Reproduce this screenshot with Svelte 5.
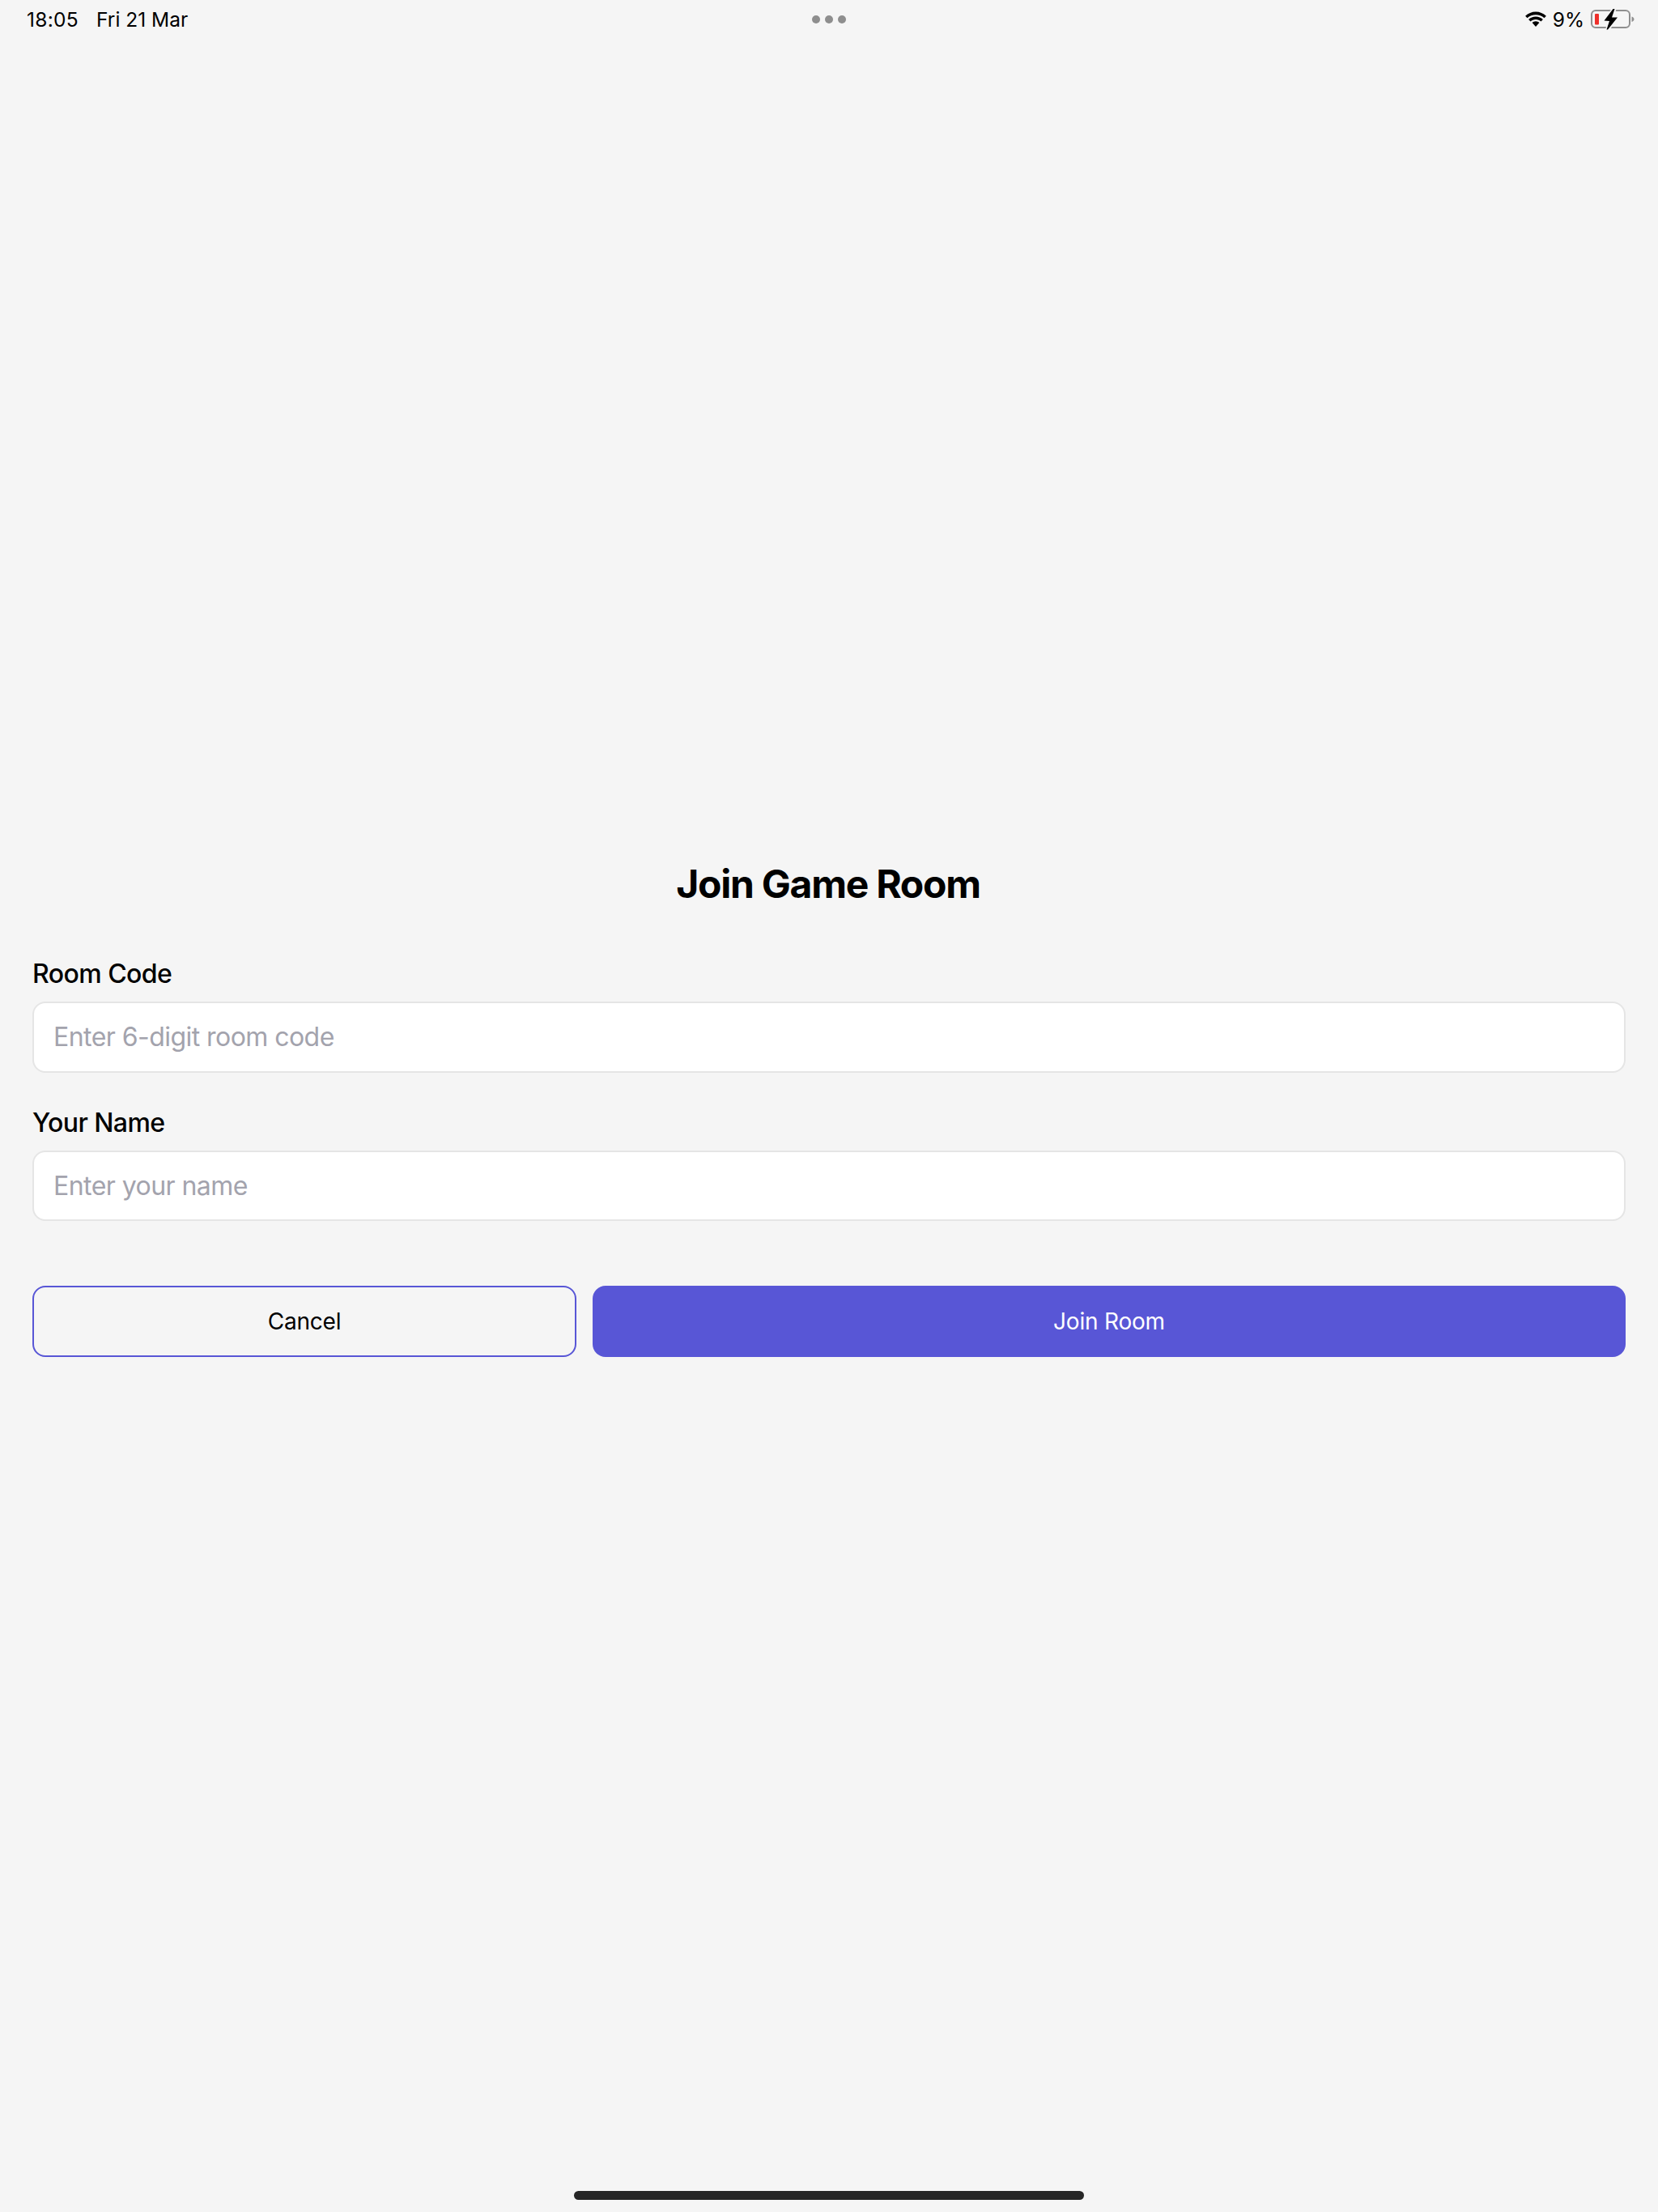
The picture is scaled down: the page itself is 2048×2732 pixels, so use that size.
<script>
  let roomCode = $state('');
  let playerName = $state('');
</script>

<div class="page">
  <header class="status">
    <div class="clock"><span class="time">18:05</span><span>Fri 21 Mar</span></div>
    <div class="dots"><i></i><i></i><i></i></div>
    <div class="sys">
      <svg class="wifi" width="30" height="20" viewBox="0 0 30 20" aria-hidden="true">
        <path d="M15 4.200c4 0 7.700 1.500 10.500 4.100l2.400-2.500C24.400 2.400 19.900.4 15 .4S5.600 2.400 2.100 5.800l2.400 2.500C7.300 5.700 11 4.200 15 4.200z"/>
        <path d="M15 10c2.500 0 4.800 1 6.500 2.600l2.400-2.500C21.600 7.900 18.500 6.500 15 6.500s-6.600 1.400-8.900 3.600l2.400 2.500C10.200 11 12.500 10 15 10z"/>
        <path d="M15 12.300c-1.700 0-3.200.7-4.400 1.800L15 19l4.400-4.900c-1.200-1.100-2.700-1.800-4.400-1.800z"/>
      </svg>
      <span class="pct">9%</span>
      <svg class="battery" width="54" height="26" viewBox="0 0 54 26" aria-hidden="true">
        <rect x="1" y="2" width="47" height="21" rx="5" fill="none" stroke="#8f8f8f" stroke-width="2"/>
        <path d="M50.500 9.500c1.700.5 3 1.700 3 3.200s-1.300 2.700-3 3.200z" fill="#8f8f8f"/>
        <rect x="5" y="6" width="5" height="13.500" rx="1" fill="#ee2f2a"/>
        <path d="M16.500 14.500 27.500 0h2.500l-3.500 10.500h7L21.500 25.500h-2L23 15z" fill="#f5f5f5" stroke="#f5f5f5" stroke-width="3"/>
        <path d="M16.500 14.500 27.500 0h2l-3.500 10.500h7L21 25.500h-1.500L23 15z" fill="#000"/>
      </svg>
    </div>
  </header>

  <main class="form">
    <h1>Join Game Room</h1>
    <div class="field">
      <label for="code">Room Code</label>
      <input id="code" placeholder="Enter 6-digit room code" bind:value={roomCode} />
    </div>
    <div class="field">
      <label for="name">Your Name</label>
      <input id="name" placeholder="Enter your name" bind:value={playerName} />
    </div>
    <div class="actions">
      <button class="cancel" type="button">Cancel</button>
      <button class="join" type="button">Join Room</button>
    </div>
  </main>

  <div class="home"></div>
</div>

<style>
  :global(body) {
    margin: 0;
    background: #f5f5f5;
  }
  .page {
    position: relative;
    box-sizing: border-box;
    height: 2732px;
    padding: 5px 40px 0;
    display: flex;
    flex-direction: column;
    justify-content: center;
    background: #f5f5f5;
    color: #000;
    font-family: Inter, "Liberation Sans", sans-serif;
  }
  .status {
    position: absolute;
    top: 0;
    left: 0;
    right: 0;
    height: 48px;
    font-size: 24.5px;
    line-height: 48px;
  }
  .clock {
    position: absolute;
    left: 33px;
    top: 0;
    display: flex;
    gap: 22px;
  }
  .time {
    letter-spacing: 0.3px;
  }
  .dots {
    position: absolute;
    left: 1003px;
    top: 19px;
    display: flex;
    gap: 6px;
  }
  .dots i {
    width: 10px;
    height: 10px;
    border-radius: 50%;
    background: #8e8e8e;
  }
  .sys {
    position: absolute;
    right: 29px;
    top: 0;
    height: 48px;
    display: flex;
    align-items: center;
    gap: 8px;
  }
  .wifi {
    display: block;
    margin: -1px -2px 0 0;
  }
  .battery {
    display: block;
  }
  h1 {
    margin: 0 0 58px;
    padding-right: 2px;
    text-align: center;
    font-size: 48px;
    line-height: 62px;
    font-weight: 700;
    letter-spacing: -1.25px;
  }
  .field {
    margin-bottom: 40px;
  }
  label {
    display: block;
    margin-bottom: 12px;
    font-size: 32px;
    line-height: 44px;
    font-weight: 500;
    letter-spacing: -0.55px;
  }
  input {
    display: block;
    box-sizing: border-box;
    width: 100%;
    height: 87.5px;
    padding: 0 24px;
    border: 2px solid #e5e5e5;
    border-radius: 16px;
    background: #fff;
    color: #000;
    font-family: inherit;
    font-size: 32px;
    letter-spacing: -0.55px;
    outline: none;
  }
  input::placeholder {
    color: #a3a3ad;
    opacity: 1;
  }
  .actions {
    display: flex;
    gap: 20px;
    margin-top: 80px;
  }
  button {
    box-sizing: border-box;
    height: 88px;
    padding: 0 30px;
    border-radius: 16px;
    font-family: inherit;
    font-size: 28px;
    font-weight: 400;
    letter-spacing: -0.2px;
  }
  .cancel {
    flex: 1;
    border: 2px solid #5856d6;
    background: transparent;
    color: #000;
  }
  .join {
    flex: 2;
    border: 0;
    background: #5856d6;
    color: #fff;
  }
  .home {
    position: absolute;
    left: 709px;
    top: 2706px;
    width: 630px;
    height: 11px;
    border-radius: 6px;
    background: #262626;
  }
</style>
